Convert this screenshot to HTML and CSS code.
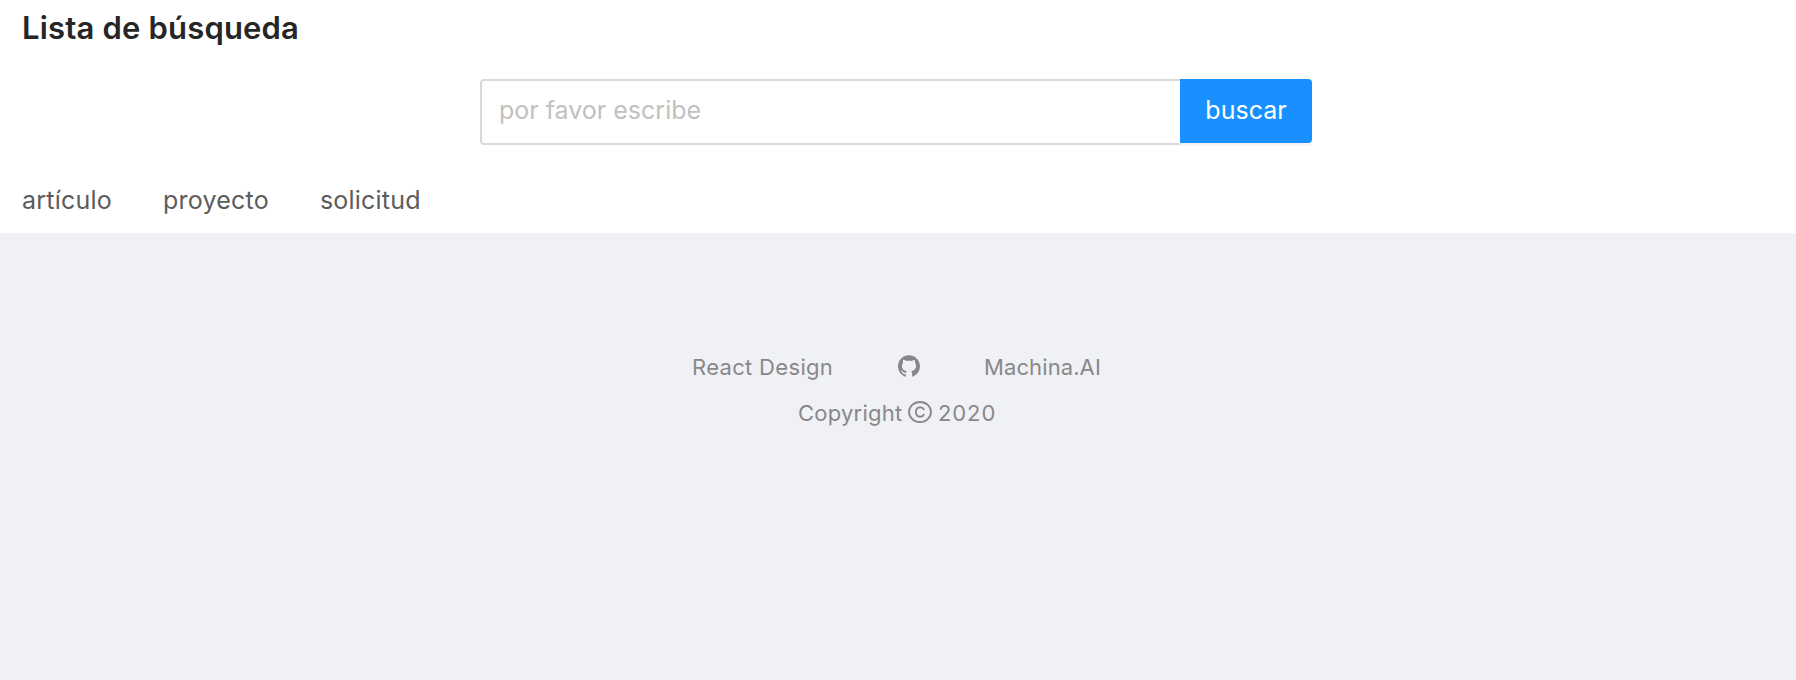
FILE: index.html
```html
<!DOCTYPE html>
<html lang="es">
<head>
<meta charset="utf-8">
<title>Lista de búsqueda</title>
<link rel="stylesheet" href="styles.css">
</head>
<body>
<header class="page-header">
  <h1 class="title">Lista de búsqueda</h1>
  <form class="search">
    <input class="search-input" type="text" placeholder="por favor escribe">
    <button class="search-button" type="button">buscar</button>
  </form>
  <nav class="tabs">
    <a class="tab">artículo</a>
    <a class="tab">proyecto</a>
    <a class="tab">solicitud</a>
  </nav>
</header>
<footer class="footer">
  <div class="links">
    <a class="link-design">React Design</a>
    <svg class="github" viewBox="64 64 896 896" fill="currentColor"><path d="M511.6 76.3C264.3 76.2 64 276.4 64 523.5 64 718.9 189.3 885 363.8 946c23.5 5.900 19.900-10.800 19.900-22.200v-77.500c-135.700 15.900-141.200-73.900-150.300-88.900C215 726 171.500 718 184.500 703c30.900-15.900 62.400 4 98.900 57.900 26.400 39.100 77.900 32.500 104 26 5.700-23.500 17.900-44.500 34.700-60.800-140.600-25.200-199.200-111-199.200-213 0-49.500 16.300-95 48.300-131.700-20.400-60.500 1.900-112.300 4.900-120 58.100-5.200 118.500 41.600 123.200 45.300 33-8.900 70.700-13.600 112.900-13.600 42.400 0 80.200 4.900 113.500 13.900 11.300-8.600 67.300-48.800 121.300-43.900 2.900 7.700 24.700 58.300 5.500 118 32.400 36.800 48.900 82.700 48.900 132.300 0 102.200-59 188.100-200 212.900a127.500 127.500 0 0 1 38.100 91v112.500c.8 9 0 17.900 15 17.900 177.100-59.700 304.600-227 304.600-424.100 0-247.200-200.400-447.300-447.500-447.300z"/></svg>
    <a class="link-machina">Machina.AI</a>
  </div>
  <div class="copyright">
    <span class="copy-label">Copyright</span>
    <svg class="copy-icon" viewBox="0 0 24 22" fill="none" stroke="currentColor" stroke-width="1.850"><ellipse cx="12" cy="11" rx="11" ry="10"/><path d="M16 9.100C15.500 7.400 14 6.300 12.200 6.300c-2.700 0-4.300 1.900-4.300 4.700s1.600 4.700 4.300 4.700c1.900 0 3.400-1 3.800-2.800"/></svg>
    <span class="year">2020</span>
  </div>
</footer>
</body>
</html>
```
FILE: styles.css
```css
* { box-sizing: border-box; }
body { margin: 0; min-height: 680px; background: #f0f1f5; font-family: Inter, "Liberation Sans", sans-serif; }
.page-header { height: 233px; padding: 8px 22px 0; background: #fff; }
.title { margin: 0; width: max-content; font-size: 31px; line-height: 40px; font-weight: 600; letter-spacing: 0.18px; color: #262626; }
.search { display: flex; width: 832px; height: 66px; margin: 31px auto 0 458px; }
.search-input { width: 700px; height: 66px; padding: 0 17px 4px; border: 2px solid #d9d9d9; border-right: 0; border-radius: 4px 0 0 4px; font: 25px Inter, sans-serif; outline: 0; }
.search-input::placeholder { color: #c1c1c1; }
.search-button { width: 132px; height: 64px; padding: 0 0 2px; border: 0; border-radius: 0 4px 4px 0; background: #1890ff; box-shadow: 0 3px 0 #f4f4f4; color: #fff; font: 25px Inter, sans-serif; }
.tabs { display: flex; gap: 51px; margin-top: 35px; font-size: 25px; line-height: 40px; letter-spacing: 0.22px; color: #5c5c5c; }
.footer { padding-top: 114px; color: #88888a; font-size: 22px; line-height: 40px; letter-spacing: 0.32px; }
.links { display: flex; align-items: center; height: 40px; margin-left: 692px; }
.link-design { width: 206px; }
.github { width: 22px; height: 22px; margin: 0 64px 3px 0; }
.link-machina { letter-spacing: 0.1px; }
.copyright { display: flex; align-items: center; height: 40px; margin: 6px 0 0 798px; }
.copy-label { width: 110px; letter-spacing: 0.22px; }
.copy-icon { width: 24px; height: 22px; margin: 0 6px 2px 0; }
.year { letter-spacing: 0.9px; }
```
